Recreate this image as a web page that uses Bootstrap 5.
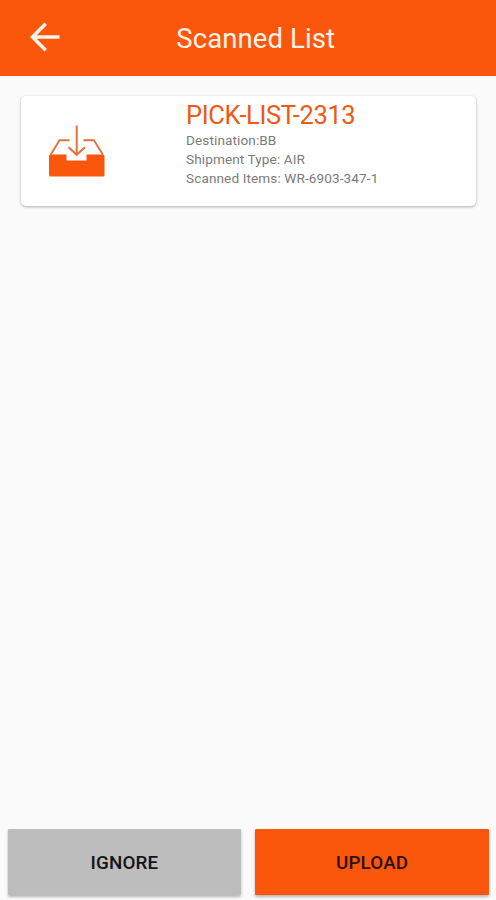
<!DOCTYPE html>
<html lang="en">
<head>
<meta charset="utf-8">
<meta name="viewport" content="width=device-width, initial-scale=1">
<title>Scanned List</title>
<link href="https://cdn.jsdelivr.net/npm/bootstrap@5.3.0/dist/css/bootstrap.min.css" rel="stylesheet">
<style>
  body { font-family: Roboto, sans-serif; background: #fafafa; height: 900px; }
  .topbar { height: 75.5px; background: #fa570d; padding: 0 14.5px 1px 30px; }
  .side { width: 30px; }
  .screen-title { font-size: 27.5px; line-height: 32px; color: #fff3e6; letter-spacing: .1px; margin-top: 3px; }
  .pick-card { margin: 20.5px 20px 0 21px; height: 110px; border: 0; border-radius: 5px; box-shadow: 0 1px 3px rgba(0,0,0,.3); }
  .pick-icon { width: 165px; padding: 29px 0 0 27px; }
  .pick-title { font-size: 25.5px; line-height: 30px; color: #ec5a14; letter-spacing: -.36px; margin: 4px 0 1px; font-weight: 400; }
  .pick-line { font-size: 13.6px; line-height: 19.2px; letter-spacing: .1px; color: #7b7b7b; }
  .actions { padding: 0 7px 5px 7.5px; gap: 14px; }
  .act { height: 66px; border: 0; border-radius: 1px; padding-top: 8px; font-size: 18.8px; letter-spacing: .15px; font-weight: 500; color: #141414; box-shadow: 0 2px 3px rgba(0,0,0,.28); }
  .act-ignore, .act-ignore:hover { background: #bdbdbd; }
  .act-upload, .act-upload:hover { background: #fa570d; color: #2b1109; }
</style>
</head>
<body class="d-flex flex-column overflow-hidden">
  <header class="topbar d-flex align-items-center justify-content-between flex-shrink-0">
    <a href="#" class="side d-flex" aria-label="Back">
      <svg width="30" height="30" viewBox="0 0 30 30" fill="none" stroke="#fff5ea" stroke-width="3.500"><path d="M29.500 15H2.500M15.700 1.800L2.500 15l13.200 13.200"/></svg>
    </a>
    <h1 class="screen-title mb-0 fw-normal">Scanned List</h1>
    <span class="side"></span>
  </header>
  <main class="flex-grow-1">
    <section class="card pick-card flex-row">
      <div class="pick-icon flex-shrink-0">
        <svg class="d-block" width="58" height="54" viewBox="0 0 58 54" fill="none">
          <path d="M3 29.500H18.500V35.500H38.500V29.500H55Q56.500 29.500 56.500 31V50Q56.500 51.500 55 51.500H3Q1 51.500 1 50V31Q1 29.500 3 29.500Z" fill="#fa570d"/>
          <path d="M2.500 30L11.500 15.300H21.500M35.500 15.300H46L55 30" stroke="#e8703c" stroke-width="1.900"/>
          <path d="M28.700 .5V30M20.500 22.200L28.700 29.800L36.900 22.200" stroke="#e8703c" stroke-width="2"/>
        </svg>
      </div>
      <div>
        <h2 class="pick-title">PICK-LIST-2313</h2>
        <div class="pick-line">Destination:BB</div>
        <div class="pick-line">Shipment Type: AIR</div>
        <div class="pick-line">Scanned Items: WR-6903-347-1</div>
      </div>
    </section>
  </main>
  <footer class="actions d-flex">
    <button type="button" class="btn act act-ignore flex-fill w-50">IGNORE</button>
    <button type="button" class="btn act act-upload flex-fill w-50">UPLOAD</button>
  </footer>
<script src="https://cdn.jsdelivr.net/npm/bootstrap@5.3.0/dist/js/bootstrap.bundle.min.js"></script>
</body>
</html>
